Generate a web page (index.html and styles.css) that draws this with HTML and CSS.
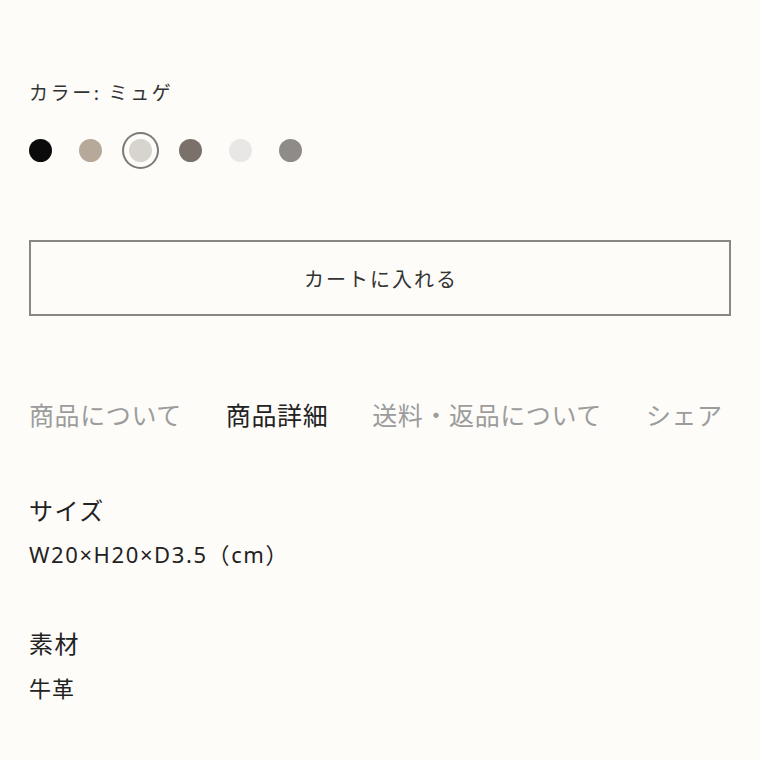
FILE: index.html
```html
<!DOCTYPE html>
<html lang="ja">
<head>
<meta charset="utf-8">
<link rel="stylesheet" href="styles.css">
</head>
<body>
<main class="page">
  <p class="color-label">カラー: ミュゲ</p>
  <div class="swatches">
    <span class="swatch sw-black"></span>
    <span class="swatch sw-tan"></span>
    <span class="swatch sw-muguet selected"></span>
    <span class="swatch sw-taupe"></span>
    <span class="swatch sw-white"></span>
    <span class="swatch sw-gray"></span>
  </div>
  <button class="cart">カートに入れる</button>
  <nav class="tabs">
    <span class="tab">商品について</span>
    <span class="tab active">商品詳細</span>
    <span class="tab">送料・返品について</span>
    <span class="tab">シェア</span>
  </nav>
  <dl class="spec">
    <div class="spec-item">
      <dt>サイズ</dt>
      <dd class="dims">W20×H20×D3.5（cm）</dd>
    </div>
    <div class="spec-item">
      <dt>素材</dt>
      <dd>牛革</dd>
    </div>
  </dl>
</main>
</body>
</html>
```

FILE: styles.css
```css
html, body {
  margin: 0;
  padding: 0;
  background: #fdfcf9;
}
body {
  font-family: "Noto Sans CJK JP", "Noto Sans", sans-serif;
  color: #222;
}
.page {
  padding: 78px 29px 0 29px;
}
.color-label {
  margin: 0;
  font-size: 19px;
  line-height: 28px;
  letter-spacing: 2.6px;
  color: #333;
}
.swatches {
  display: flex;
  gap: 27px;
  margin-top: 33px;
  height: 23px;
}
.swatch {
  width: 23px;
  height: 23px;
  border-radius: 50%;
  display: block;
}
.sw-black { background: #0b0b0b; }
.sw-tan { background: #b6a999; }
.sw-muguet { background: #d7d4cd; }
.sw-taupe { background: #7a716a; }
.sw-white { background: #e9e7e5; }
.sw-gray { background: #8f8b89; }
.swatch.selected {
  box-shadow: 0 0 0 5px #fdfcf9, 0 0 0 7px #7c7a78;
}
.cart {
  display: block;
  width: 100%;
  height: 76px;
  margin-top: 78px;
  background: #fdfcf9;
  border: 2px solid #8a8886;
  font-family: inherit;
  font-size: 20px;
  letter-spacing: 2px;
  color: #333;
  padding: 0 0 0 2px;
}
.tabs {
  display: flex;
  gap: 44px;
  margin-top: 80px;
  font-size: 25px;
  line-height: 36px;
  letter-spacing: 0.6px;
  color: #9c9c9c;
}
.tab.active {
  color: #222;
}
.spec {
  margin: 56px 0 0 0;
  display: flex;
  flex-direction: column;
  gap: 45px;
}
.spec-item dt,
.spec-item dd {
  margin: 0;
  line-height: 44px;
}
.spec-item dt {
  font-size: 24px;
  letter-spacing: 1.5px;
}
.spec-item dd {
  font-size: 22px;
  letter-spacing: 1px;
}
.spec-item dd.dims {
  font-family: "Noto Sans", "Noto Sans CJK JP", sans-serif;
  letter-spacing: 1.6px;
}
```
